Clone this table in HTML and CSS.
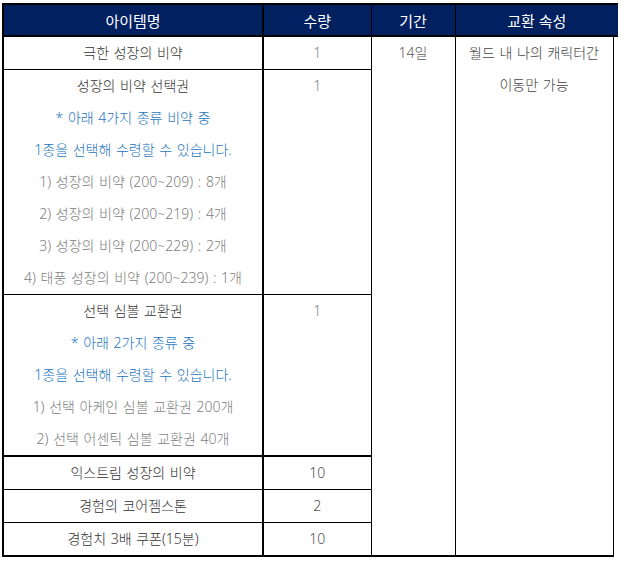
FILE: index.html
```html
<!DOCTYPE html>
<html lang="ko">
<head>
<meta charset="utf-8">
<link rel="stylesheet" href="styles.css">
</head>
<body>
<table class="items">
  <colgroup>
    <col class="c-name">
    <col class="c-qty">
    <col class="c-period">
    <col class="c-attr">
    <col class="c-extra">
  </colgroup>
  <thead>
    <tr>
      <th>아이템명</th>
      <th>수량</th>
      <th>기간</th>
      <th colspan="2" class="last">교환 속성</th>
    </tr>
  </thead>
  <tbody>
    <tr>
      <td class="name">극한 성장의 비약</td>
      <td class="qty light">1</td>
      <td class="period" rowspan="6">14일</td>
      <td class="attr" rowspan="6">월드 내 나의 캐릭터간<br>이동만 가능</td>
      <td class="extra" rowspan="6"></td>
    </tr>
    <tr>
      <td class="name">
        <div>성장의 비약 선택권</div>
        <div class="note">* 아래 4가지 종류 비약 중</div>
        <div class="note">1종을 선택해 수령할 수 있습니다.</div>
        <div class="sub">1) 성장의 비약 (200~209) : 8개</div>
        <div class="sub">2) 성장의 비약 (200~219) : 4개</div>
        <div class="sub">3) 성장의 비약 (200~229) : 2개</div>
        <div class="sub">4) 태풍 성장의 비약 (200~239) : 1개</div>
      </td>
      <td class="qty light">1</td>
    </tr>
    <tr class="group-end">
      <td class="name">
        <div>선택 심볼 교환권</div>
        <div class="note">* 아래 2가지 종류 중</div>
        <div class="note">1종을 선택해 수령할 수 있습니다.</div>
        <div class="sub">1) 선택 아케인 심볼 교환권 200개</div>
        <div class="sub">2) 선택 어센틱 심볼 교환권 40개</div>
      </td>
      <td class="qty light">1</td>
    </tr>
    <tr>
      <td class="name">익스트림 성장의 비약</td>
      <td class="qty">10</td>
    </tr>
    <tr>
      <td class="name">경험의 코어젬스톤</td>
      <td class="qty">2</td>
    </tr>
    <tr class="final">
      <td class="name">경험치 3배 쿠폰(15분)</td>
      <td class="qty">10</td>
    </tr>
  </tbody>
</table>
</body>
</html>
```
FILE: styles.css
```css
html, body {
  margin: 0;
  padding: 0;
  background: #ffffff;
}

body {
  padding: 3px 0 0 2px;
  font-family: "Noto Sans", "Noto Sans CJK KR", sans-serif;
  font-size: 14px;
  font-weight: 300;
  color: #333333;
}

.items {
  border-collapse: collapse;
  table-layout: fixed;
  width: 615px;
}

.c-name { width: 260px; }
.c-qty { width: 108px; }
.c-period { width: 84px; }
.c-attr { width: 158px; }
.c-extra { width: 5px; }

.items th {
  background: #002060;
  color: #ffffff;
  font-weight: 400;
  font-size: 15px;
  height: 30px;
  padding: 0;
  text-align: center;
  vertical-align: middle;
  border: 1px solid #000000;
  border-top: 2px solid #000000;
  border-bottom: 2px solid #000000;
}

.items th:first-child {
  border-left: 2px solid #000000;
}

.items th:nth-child(1) {
  border-right: 2px solid #000000;
}

.items th.last {
  border-right: none;
}

.items td {
  padding: 0;
  height: 32px;
  line-height: 32px;
  text-align: center;
  vertical-align: top;
  word-spacing: 1px;
  border: 1px solid #000000;
}

.items td.name {
  border-left: 2px solid #000000;
  border-right: 2px solid #000000;
}

.items td.qty {
  color: #505050;
}

.items td.qty.light {
  color: #808080;
}

.items td.period {
  color: #5a5a5a;
  border-bottom: 2px solid #000000;
}

.items td.attr {
  color: #444444;
  border-bottom: 2px solid #000000;
}

.items td.extra {
  border: none;
  border-left: 1px solid #000000;
}

.items tr.group-end td.name,
.items tr.group-end td.qty,
.items tr.final td.name,
.items tr.final td.qty {
  border-bottom: 2px solid #000000;
}

.note {
  color: #2474bf;
}

.sub {
  color: #808080;
}
```
